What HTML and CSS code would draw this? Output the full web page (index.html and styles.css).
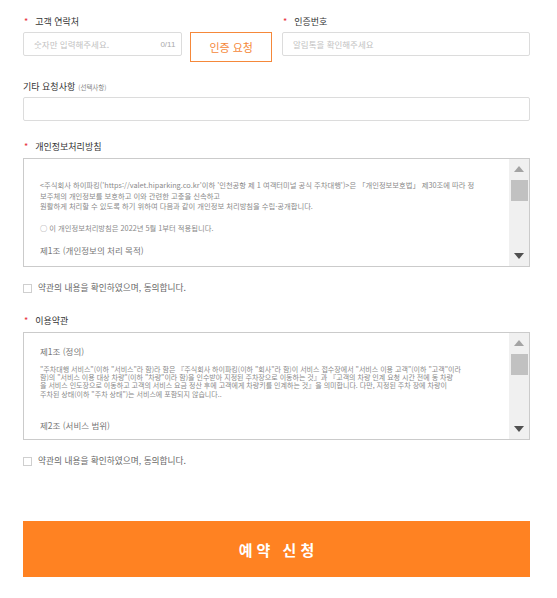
FILE: index.html
```html
<!DOCTYPE html>
<html lang="ko">
<head>
<meta charset="utf-8">
<title>예약 신청</title>
<link rel="stylesheet" href="styles.css">
</head>
<body>
<div class="page">
  <div class="row-top">
    <div class="field field-phone">
      <div class="label"><span class="req">*</span>고객 연락처</div>
      <div class="phone-line">
        <div class="input phone-input">
          <input type="text" placeholder="숫자만 입력해주세요.">
          <span class="count">0/11</span>
        </div>
        <button class="auth-btn">인증 요청</button>
      </div>
    </div>
    <div class="field field-code">
      <div class="label"><span class="req">*</span>인증번호</div>
      <div class="input"><input type="text" placeholder="알림톡을 확인해주세요"></div>
    </div>
  </div>

  <div class="section extra">
    <div class="label">기타 요청사항 <span class="opt">(선택사항)</span></div>
    <div class="input"><input type="text"></div>
  </div>

  <div class="section privacy">
    <div class="label"><span class="req">*</span>개인정보처리방침</div>
    <div class="box box-privacy">
      <div class="box-content">
        <p class="txt">&lt;주식회사 하이파킹('https://valet.hiparking.co.kr'이하 '인천공항 제 1 여객터미널 공식 주차대행')&gt;은 「개인정보보호법」 제30조에 따라 정<br>보주체의 개인정보를 보호하고 이와 관련한 고충을 신속하고<br>원활하게 처리할 수 있도록 하기 위하여 다음과 같이 개인정보 처리방침을 수립·공개합니다.</p>
        <p class="txt notice">○ 이 개인정보처리방침은 2022년 5월 1부터 적용됩니다.</p>
        <p class="art">제1조 (개인정보의 처리 목적)</p>
      </div>
      <div class="scrollbar">
        <div class="sb-btn"><svg width="10" height="6" viewBox="0 0 10 6"><polygon points="0,6 10,6 5,0" fill="#a3a3a3"/></svg></div>
        <div class="sb-thumb"></div>
        <div class="sb-track"></div>
        <div class="sb-btn"><svg width="10" height="6" viewBox="0 0 10 6"><polygon points="0,0 10,0 5,6" fill="#505050"/></svg></div>
      </div>
    </div>
  </div>

  <label class="agree">
    <span class="chk"></span>
    <span class="agree-text">약관의 내용을 확인하였으며, 동의합니다.</span>
  </label>

  <div class="section terms">
    <div class="label"><span class="req">*</span>이용약관</div>
    <div class="box box-terms">
      <div class="box-content">
        <p class="art">제1조 (정의)</p>
        <p class="txt small">"주차대행 서비스"(이하 "서비스"라 함)라 함은 『주식회사 하이파킹(이하 "회사"라 함)이 서비스 접수장에서 "서비스 이용 고객"(이하 "고객"이라<br>함)의 "서비스 이용 대상 차량"(이하 "차량"이라 함)을 인수받아 지정된 주차장으로 이동하는 것』과 『고객의 차량 인계 요청 시간 전에 동 차량<br>을 서비스 인도장으로 이동하고 고객의 서비스 요금 정산 후에 고객에게 차량키를 인계하는 것』을 의미합니다. 다만, 지정된 주차 장에 차량이<br>주차된 상태(이하 "주차 상태")는 서비스에 포함되지 않습니다..</p>
        <p class="art art2">제2조 (서비스 범위)</p>
      </div>
      <div class="scrollbar">
        <div class="sb-btn"><svg width="10" height="6" viewBox="0 0 10 6"><polygon points="0,6 10,6 5,0" fill="#a3a3a3"/></svg></div>
        <div class="sb-thumb"></div>
        <div class="sb-track"></div>
        <div class="sb-btn"><svg width="10" height="6" viewBox="0 0 10 6"><polygon points="0,0 10,0 5,6" fill="#505050"/></svg></div>
      </div>
    </div>
  </div>

  <label class="agree agree2">
    <span class="chk"></span>
    <span class="agree-text">약관의 내용을 확인하였으며, 동의합니다.</span>
  </label>

  <button class="submit">예약 신청</button>
</div>
</body>
</html>
```

FILE: styles.css
```css
* { box-sizing: border-box; }

html, body {
  margin: 0;
  padding: 0;
  background: #fff;
}

body {
  font-family: "Noto Sans CJK KR", "Noto Sans", sans-serif;
  color: #333;
}

.page {
  width: 557px;
  padding: 16px 27px 0 23px;
}

.row-top {
  display: flex;
  gap: 10px;
}

.field-phone { width: 249px; }
.field-code { flex: 1; }

.label {
  display: flex;
  align-items: center;
  height: 12px;
  line-height: 12px;
  font-size: 9px;
  color: #333;
  margin-bottom: 4px;
  white-space: nowrap;
}

.req {
  color: #e8303a;
  font-size: 9px;
  margin-left: 1px;
  margin-right: 7px;
}

.opt {
  font-size: 6.5px;
  color: #888;
  margin-left: 3px;
}

.phone-line {
  display: flex;
  gap: 8px;
  align-items: flex-start;
}

.input {
  height: 24px;
  border: 1px solid #dcdcdc;
  border-radius: 2px;
  display: flex;
  align-items: center;
  padding: 0 6px 0 10px;
  background: #fff;
}

.input input {
  flex: 1;
  min-width: 0;
  height: 100%;
  border: 0;
  outline: 0;
  padding: 0;
  background: transparent;
  font-family: inherit;
  font-size: 8.5px;
  color: #333;
}

.input input::placeholder { color: #c2c2c2; }

.phone-input { width: 160px; }

.count {
  font-size: 8px;
  color: #aaa;
  font-family: "Liberation Sans", sans-serif;
}

.auth-btn {
  width: 82px;
  height: 30px;
  padding: 0;
  border: 1px solid #f5883a;
  border-radius: 0;
  background: #fff;
  color: #f5883a;
  font-family: inherit;
  font-size: 11px;
}

.extra { margin-top: 19px; }

.privacy { margin-top: 20px; }
.privacy .label { margin-bottom: 5px; }

.terms { margin-top: 21px; }
.terms .label { margin-bottom: 5px; }

.box {
  display: flex;
  border: 1px solid #cbcbcb;
  background: #fff;
}

.box-privacy { height: 109px; }
.box-terms { height: 108px; }

.box-content {
  flex: 1;
  min-width: 0;
  overflow: hidden;
  padding: 21px 8px 0 16px;
}

.box-terms .box-content { padding-top: 12px; }

.box-content p { margin: 0; white-space: nowrap; }

.box-content .txt {
  font-size: 7.3px;
  line-height: 10.5px;
  color: #8a8a8a;
}

.box-content .txt.small {
  font-size: 7px;
  line-height: 8.2px;
  margin-top: 8px;
}

.box-content .notice {
  margin-top: 11px;
  font-size: 7.3px;
}

.box-content .art {
  font-size: 8.5px;
  line-height: 12px;
  color: #777;
  margin-top: 11px;
}

.box-terms .box-content .art { margin-top: 0; }
.box-terms .box-content .art2 { margin-top: 21px; }

.scrollbar {
  width: 20px;
  display: flex;
  flex-direction: column;
  align-items: center;
  background: #f0f0f0;
}

.sb-btn {
  height: 20px;
  width: 100%;
  display: flex;
  align-items: center;
  justify-content: center;
}

.sb-thumb {
  width: 17px;
  height: 21px;
  margin-top: 1px;
  background: #c1c1c1;
}

.sb-track { flex: 1; }

.agree {
  display: flex;
  align-items: center;
  gap: 6px;
  height: 12px;
  margin-top: 15px;
}

.chk {
  width: 9px;
  height: 9px;
  border: 1px solid #cfcfcf;
  background: #fff;
}

.agree-text {
  font-size: 8.7px;
  line-height: 12px;
  color: #666;
}

.submit {
  display: block;
  width: 100%;
  height: 56px;
  margin-top: 54px;
  border: 0;
  padding: 0;
  background: #ff8222;
  color: #fff;
  font-family: inherit;
  font-size: 15px;
  font-weight: 700;
  letter-spacing: 4px;
  text-indent: 4px;
}
```
